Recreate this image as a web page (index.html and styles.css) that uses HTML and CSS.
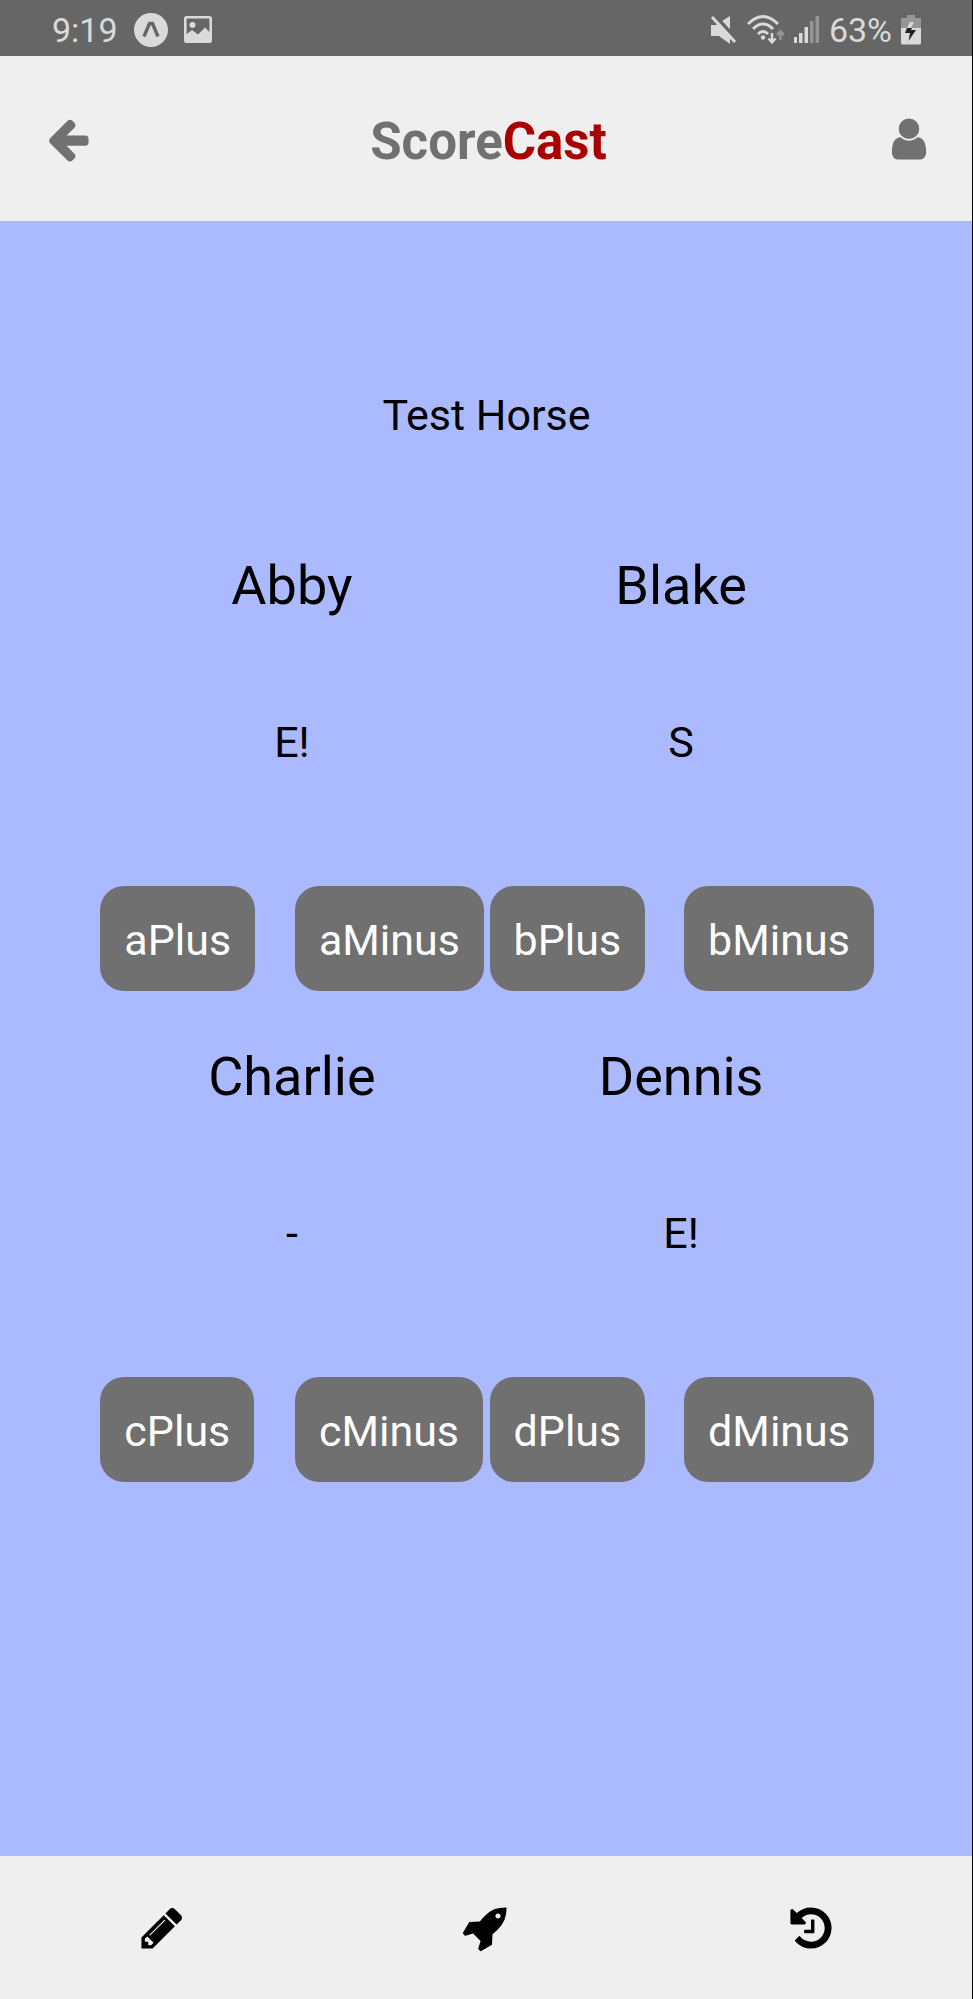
FILE: index.html
```html
<!DOCTYPE html>
<html lang="en">
<head>
<meta charset="utf-8">
<meta name="viewport" content="width=device-width, initial-scale=1">
<title>ScoreCast</title>
<link rel="stylesheet" href="styles.css">
</head>
<body>
<div class="app">
  <div class="status">
    <div class="status-group">
      <span class="clock">9:19</span>
      <svg class="expo" viewBox="0 0 34 34" aria-hidden="true"><circle cx="17" cy="17" r="17" fill="#dadada"/><path d="M10 23.500 15.500 10.500h3L24 23.500" fill="none" stroke="#666" stroke-width="3.400"/></svg>
      <svg class="photo" viewBox="0 0 28 28" aria-hidden="true"><rect x="1.300" y="1.300" width="25.400" height="24.400" rx="1.500" fill="none" stroke="#dadada" stroke-width="2.600"/><circle cx="8.500" cy="9" r="3" fill="#dadada"/><path d="M2 18.500l6-4.500 6 4.500 7-7 6 6V26H2z" fill="#dadada"/></svg>
    </div>
    <div class="status-group status-right">
      <svg class="mute" viewBox="0 0 28 30" aria-hidden="true"><path d="M1 10h5l14-9v28L9 21H1z" fill="#dadada"/><path d="M4 0 28 26" stroke="#666" stroke-width="4"/><path d="M2 2 25 27" stroke="#dadada" stroke-width="3"/></svg>
      <svg class="wifi" viewBox="0 0 38 30" aria-hidden="true"><g fill="none" stroke="#dadada" stroke-width="3"><path d="M1 9Q16-6 31 9"/><path d="M6 14q10-10 20 0"/><path d="M11 19q5-5 10 0"/></g><circle cx="16" cy="22.500" r="2.200" fill="#dadada"/><path d="M25 18v9M21.500 23.500 25 27.500l3.500-4" fill="none" stroke="#dadada" stroke-width="2.400"/><path d="M33.500 25v-9M30 20l3.500-4 3.500 4" fill="none" stroke="#969696" stroke-width="2.400"/></svg>
      <svg class="signal" viewBox="0 0 26 28" aria-hidden="true"><path d="M0 21h3v6H0zM5 17h3.500v10H5zM10.500 11H14v16h-3.500z" fill="#dadada"/><path d="M16 5h3.500v22H16zM21.500 0H25v27h-3.500z" fill="#969696"/></svg>
      <span>63%</span>
      <svg class="battery" viewBox="0 0 20 30" aria-hidden="true"><path d="M6 0h8v3h6v11H0V3h6z" fill="#969696"/><path d="M0 13h20v15q0 1.500-1.500 1.500h-17Q0 29.500 0 28z" fill="#dadada"/><path d="M9 7h4l-3 6H6z" fill="#dadada"/><path d="M6 13h5l-1 2h5L7.500 26 9 18H4z" fill="#222"/></svg>
    </div>
  </div>

  <header class="header">
    <button class="icon-button muted" type="button" aria-label="Back">
      <svg class="icon" viewBox="0 0 1792 1792"><path d="M1664 896v128q0 53-32.500 90.500t-84.500 37.500h-704l293 294q38 36 38 90t-38 90l-75 76q-37 37-90 37-52 0-91-37l-651-652q-37-37-37-90 0-52 37-91l651-650q38-38 91-38 52 0 90 38l75 74q38 38 38 91t-38 91l-293 293h704q52 0 84.500 37.500t32.500 90.500z"/></svg>
    </button>
    <h1 class="title">Score<span class="title-accent">Cast</span></h1>
    <button class="icon-button muted" type="button" aria-label="Profile">
      <svg class="icon" viewBox="0 0 1792 1792"><path d="M1536 1399q0 109-62.500 187t-150.500 78h-854q-88 0-150.500-78t-62.500-187q0-85 8.500-160.500t31.500-152 58.500-131 94-89 134.500-34.500q131 128 313 128t313-128q76 0 134.500 34.500t94 89 58.500 131 31.500 152 8.500 160.500zm-256-887q0 159-112.500 271.500t-271.500 112.500-271.500-112.500-112.500-271.500 112.500-271.500 271.500-112.500 271.500 112.500 112.500 271.500z"/></svg>
    </button>
  </header>

  <main class="game">
    <h2 class="game-name">Test Horse</h2>
    <div class="players">
      <section class="player">
        <h3 class="player-name">Abby</h3>
        <p class="score">E!</p>
        <div class="actions"><button class="action" type="button">aPlus</button><button class="action" type="button">aMinus</button></div>
      </section>
      <section class="player">
        <h3 class="player-name">Blake</h3>
        <p class="score">S</p>
        <div class="actions"><button class="action" type="button">bPlus</button><button class="action" type="button">bMinus</button></div>
      </section>
      <section class="player">
        <h3 class="player-name">Charlie</h3>
        <p class="score">-</p>
        <div class="actions"><button class="action" type="button">cPlus</button><button class="action" type="button">cMinus</button></div>
      </section>
      <section class="player">
        <h3 class="player-name">Dennis</h3>
        <p class="score">E!</p>
        <div class="actions"><button class="action" type="button">dPlus</button><button class="action" type="button">dMinus</button></div>
      </section>
    </div>
  </main>

  <nav class="tabs">
    <button class="icon-button" type="button" aria-label="Edit">
      <svg class="icon" viewBox="0 0 1792 1792"><path d="M491 1536l91-91-235-235-91 91v107h128v128h107zm523-928q0-22-22-22-10 0-17 7l-542 542q-7 7-7 17 0 22 22 22 10 0 17-7l542-542q7-7 7-17zm-54-192l416 416-832 832h-416v-416zm683 96q0 53-37 90l-166 166-416-416 166-165q36-38 90-38 53 0 91 38l235 234q37 39 37 91z"/></svg>
    </button>
    <button class="icon-button" type="button" aria-label="Play">
      <svg class="icon" viewBox="0 0 1792 1792"><path d="M1440 448q0-40-28-68t-68-28-68 28-28 68 28 68 68 28 68-28 28-68zm224-288q0 249-75.500 430.500t-253.500 360.500q-81 80-195 176l-20 379q-2 16-16 26l-384 224q-7 4-16 4-12 0-23-9l-64-64q-13-14-8-32l85-276-281-281-276 85q-3 1-9 1-14 0-23-9l-64-64q-17-19-5-39l224-384q10-14 26-16l379-20q96-114 176-195 188-187 358-258t431-71q14 0 24 9.500t10 22.500z"/></svg>
    </button>
    <button class="icon-button" type="button" aria-label="History">
      <svg class="icon" viewBox="0 0 1792 1792"><path d="M1664 896q0 156-61 298t-164 245-245 164-298 61q-172 0-327-72.500t-264-204.500q-7-10-6.500-22.500t8.500-20.500l137-138q10-9 25-9 16 2 23 12 73 95 179 147t225 52q104 0 198.500-40.500t163.500-109.500 109.500-163.500 40.500-198.500-40.500-198.500-109.500-163.500-163.500-109.500-198.500-40.500q-98 0-188 35.500t-160 101.500l137 138q31 30 14 69-17 40-59 40h-448q-26 0-45-19t-19-45v-448q0-42 40-59 39-17 69 14l130 129q107-101 244.500-156.500t284.500-55.500q156 0 298 61t245 164 164 245 61 298zm-640-288v448q0 14-9 23t-23 9h-320q-14 0-23-9t-9-23v-64q0-14 9-23t23-9h224v-352q0-14 9-23t23-9h64q14 0 23 9t9 23z"/></svg>
    </button>
  </nav>
</div>
</body>
</html>
```
FILE: styles.css
```css
* {
  box-sizing: border-box;
}

body {
  margin: 0;
  font-family: Roboto, "Liberation Sans", sans-serif;
  color: #000;
}

.app {
  position: relative;
  display: flex;
  flex-direction: column;
  min-height: 100vh;
  background: #abbaff;
}

/* Dark line along the right edge, over all bars */
.app::after {
  content: "";
  position: absolute;
  top: 0;
  right: 0;
  bottom: 0;
  width: 1px;
  background: #000;
}

h1, h2, h3, p {
  margin: 0;
  font-weight: 400;
}

svg {
  display: block;
  flex: none;
}

/* Status bar */
.status {
  display: flex;
  justify-content: space-between;
  align-items: center;
  height: 56px;
  padding: 4px 52px 0;
  background: #666;
  color: #dadada;
  font-size: 34px;
  line-height: 40px;
}

.status-group {
  display: flex;
  align-items: center;
  gap: 16px;
}

.status-right {
  gap: 9px;
}

.expo {
  width: 34px;
  height: 34px;
}

.photo {
  width: 28px;
  height: 28px;
}

.mute {
  width: 28px;
  height: 30px;
}

.wifi {
  width: 38px;
  height: 30px;
}

.signal {
  width: 26px;
  height: 28px;
}

.battery {
  width: 20px;
  height: 30px;
}

/* Header */
.header {
  display: flex;
  justify-content: space-between;
  align-items: center;
  height: 165px;
  padding: 0 40px 0 44px;
  background: #efefef;
}

.title {
  padding-top: 6px;
  font-size: 51px;
  line-height: 60px;
  font-weight: 700;
  color: #717171;
}

.title-accent {
  color: #a90000;
}

.icon-button {
  padding: 0;
  border: 0;
  background: none;
  color: #000;
  cursor: pointer;
}

.icon-button.muted {
  color: #717171;
}

.icon {
  width: 48px;
  height: 48px;
  fill: currentColor;
}

/* Game */
.game {
  flex: 1;
  padding: 169px 10% 0;
}

.game-name {
  font-size: 43px;
  line-height: 50px;
  text-align: center;
}

.players {
  display: grid;
  grid-template-columns: 1fr 1fr;
  padding-top: 60px;
}

.player {
  padding-top: 54px;
  text-align: center;
}

.player-name {
  font-size: 54px;
  line-height: 64px;
}

.score {
  padding: 99px 0 119px;
  font-size: 43px;
  line-height: 50px;
}

.actions {
  display: grid;
  grid-template-columns: 1fr 1fr;
  justify-items: start;
}

.action {
  height: 105px;
  margin-left: 3px;
  padding: 2px 24px 0;
  border: 0;
  border-radius: 24px;
  background: #707070;
  color: #fff;
  font-family: inherit;
  font-size: 43px;
  line-height: 50px;
  cursor: pointer;
}

/* Bottom tabs */
.tabs {
  display: grid;
  grid-template-columns: repeat(3, 1fr);
  justify-items: center;
  align-items: center;
  height: 143px;
  background: #efefef;
}
```
